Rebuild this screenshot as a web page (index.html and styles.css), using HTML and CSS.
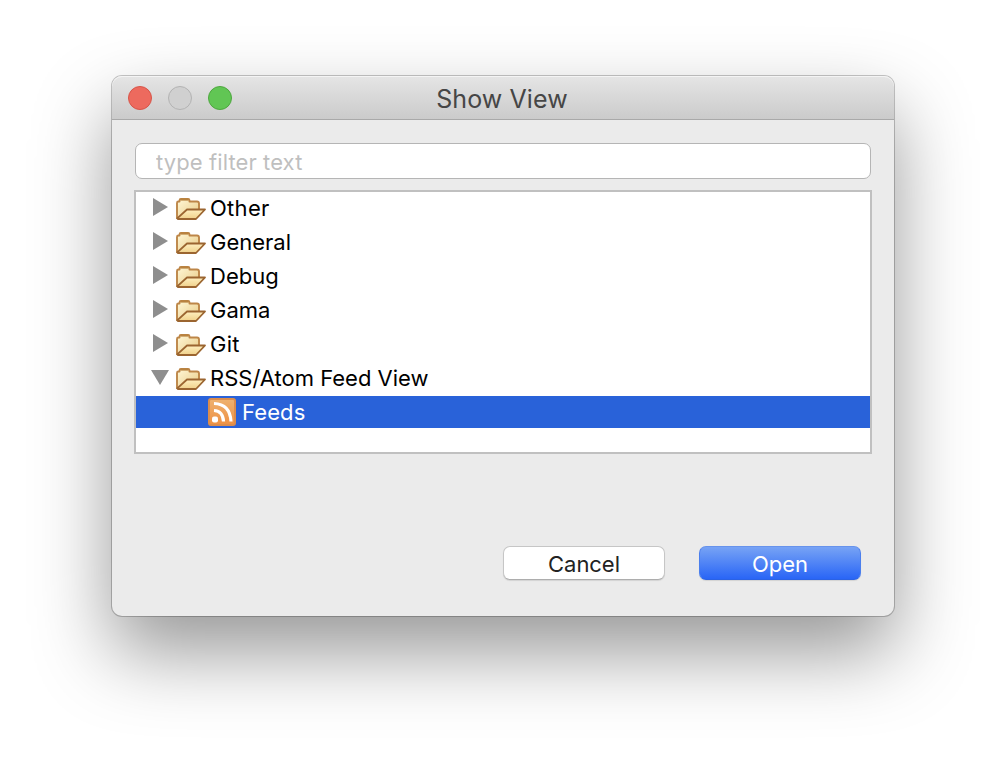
FILE: index.html
```
<!DOCTYPE html>
<html lang="en">
<head>
<meta charset="utf-8">
<title>Show View</title>
<link rel="stylesheet" href="styles.css">
</head>
<body>
<svg width="0" height="0" class="defs" aria-hidden="true">
  <defs>
    <linearGradient id="paper" x1="0" y1="0" x2="1" y2="1"><stop offset="0" stop-color="#fff8d8"/><stop offset="1" stop-color="#e8c983"/></linearGradient>
    <linearGradient id="flap" x1="0" y1="0" x2="0" y2="1"><stop offset="0" stop-color="#fff0c0"/><stop offset="1" stop-color="#efd08a"/></linearGradient>
    <linearGradient id="orange" x1="0" y1="0" x2="0" y2="1"><stop offset="0" stop-color="#eeb270"/><stop offset="1" stop-color="#ee9144"/></linearGradient>
    <symbol id="folder" viewBox="0 0 32 26">
      <path d="M2 21V6Q2 4.500 3.500 4.500H4.500V3.500Q4.500 2 6 2H13Q14.500 2 14.500 3.500V4.500H22Q24 4.500 24 6.500V12L8 22Z" fill="url(#paper)" stroke="#bd8648" stroke-width="1.900" stroke-linejoin="round"/>
      <path d="M5.500 2.500H13.500" stroke="#b8823f" stroke-width="2.200"/>
      <path d="M2.200 21.300L12 12.500H30L21 22H3Z" fill="url(#flap)" stroke="#9b6530" stroke-width="1.800" stroke-linejoin="round"/>
    </symbol>
  </defs>
</svg>
<main class="window">
  <header class="titlebar">
    <span class="light close"></span><span class="light minimize"></span><span class="light zoom"></span>
    <h1 class="title">Show View</h1>
  </header>
  <section class="content">
    <input class="filter" type="text" placeholder="type filter text">
    <ul class="tree">
      <li class="row"><span class="arrow"></span><svg class="folder"><use href="#folder"/></svg><span class="label other">Other</span></li>
      <li class="row"><span class="arrow"></span><svg class="folder"><use href="#folder"/></svg><span class="label">General</span></li>
      <li class="row"><span class="arrow"></span><svg class="folder"><use href="#folder"/></svg><span class="label">Debug</span></li>
      <li class="row"><span class="arrow"></span><svg class="folder"><use href="#folder"/></svg><span class="label">Gama</span></li>
      <li class="row"><span class="arrow"></span><svg class="folder"><use href="#folder"/></svg><span class="label git">Git</span></li>
      <li class="row"><span class="arrow down"></span><svg class="folder"><use href="#folder"/></svg><span class="label">RSS/Atom Feed View</span></li>
      <li class="row selected">
        <svg class="feed" viewBox="0 0 28 28">
          <rect x="1" y="1" width="26" height="26" rx="2" fill="url(#orange)" stroke="#dc8d4c" stroke-width="2"/>
          <rect x="4" y="18.500" width="6" height="6" rx="2" fill="#fff"/>
          <path d="M6 12.500Q15 13 15.500 23.500M6 5.500Q22 6 23 23.500" fill="none" stroke="#fff" stroke-width="3.200"/>
        </svg><span class="label feeds">Feeds</span></li>
    </ul>
    <footer class="actions">
      <button class="button">Cancel</button>
      <button class="button primary">Open</button>
    </footer>
  </section>
</main>
</body>
</html>
```
FILE: styles.css
```
* { box-sizing: border-box; }
body {
  margin: 0;
  height: 764px;
  padding: 76px 112px;
  overflow: hidden;
  background: #fff;
  font-family: Inter, "Liberation Sans", sans-serif;
  font-size: 22px;
}
.defs { position: absolute; }
.window {
  width: 782px;
  height: 540px;
  border-radius: 10px;
  background: #ebebeb;
  box-shadow: 0 0 0 1px rgba(0, 0, 0, .22), 0 36px 78px rgba(0, 0, 0, .41);
}
.titlebar {
  display: flex;
  align-items: center;
  height: 44px;
  padding: 0 16px;
  gap: 16px;
  border-radius: 10px 10px 0 0;
  border-bottom: 1px solid #a9a9a9;
  background: linear-gradient(#e5e5e5, #cbcbcb);
  box-shadow: inset 0 1px #f4f4f4;
}
.light { width: 24px; height: 24px; border-radius: 50%; border: 1px solid; flex: none; }
.close { background: #ed6a5e; border-color: #d75549; }
.minimize { background: #d0d0d0; border-color: #b3b3b3; }
.zoom { background: #61c654; border-color: #4ea73f; }
.title {
  flex: 1;
  margin: 2px 122px 0 0;
  text-align: center;
  font-size: 25px;
  font-weight: 400;
  letter-spacing: .1px;
  color: #464646;
}
.content { display: flex; flex-direction: column; padding: 23px 22px; }
.filter {
  width: 736px;
  height: 36px;
  margin-left: 1px;
  padding: 1px 20px 0;
  border: 1px solid #b5b5b5;
  border-radius: 7px;
  background: #fff;
  font: inherit;
  letter-spacing: .1px;
  outline: 0;
}
.filter::placeholder { color: #bfbfbf; opacity: 1; }
.tree {
  width: 738px;
  height: 264px;
  margin: 11px 0 0;
  padding: 0;
  list-style: none;
  border: 2px solid #c0c0c0;
  background: #fff;
}
.row { display: flex; align-items: center; height: 32px; margin-bottom: 2px; padding-left: 17px; }
.arrow {
  width: 15px;
  height: 18px;
  margin: -2px 7px 0 0;
  background: #8e8e8e;
  clip-path: polygon(0 0, 100% 50%, 0 100%);
}
.arrow.down {
  width: 18px;
  height: 15px;
  margin: -1px 6px 0 -2px;
  clip-path: polygon(0 0, 100% 0, 50% 100%);
}
.folder { width: 32px; height: 26px; margin: 4px 3px 0 0; }
.label { white-space: nowrap; line-height: 32px; padding-bottom: 1px; }
.other { letter-spacing: .3px; }
.git { letter-spacing: .3px; }
.feeds { letter-spacing: .1px; }
.selected { padding-left: 72px; background: #2962d9; color: #fff; }
.feed { width: 28px; height: 28px; margin-right: 6px; }
.actions { display: flex; justify-content: flex-end; gap: 34px; margin-top: 92px; padding-right: 11px; }
.button {
  width: 162px;
  height: 34px;
  padding: 2px 0 0;
  border: 1px solid #c6c6c6;
  border-bottom-color: #adadad;
  border-radius: 7px;
  background: #fff;
  font: inherit;
  letter-spacing: -.05px;
  color: #222;
  box-shadow: 0 1px 1px rgba(0, 0, 0, .1);
}
.primary {
  border-color: #6793ec #4b7fed #2b62e4;
  background: linear-gradient(#77a3f5, #2965f6);
  color: #fff;
}
```
